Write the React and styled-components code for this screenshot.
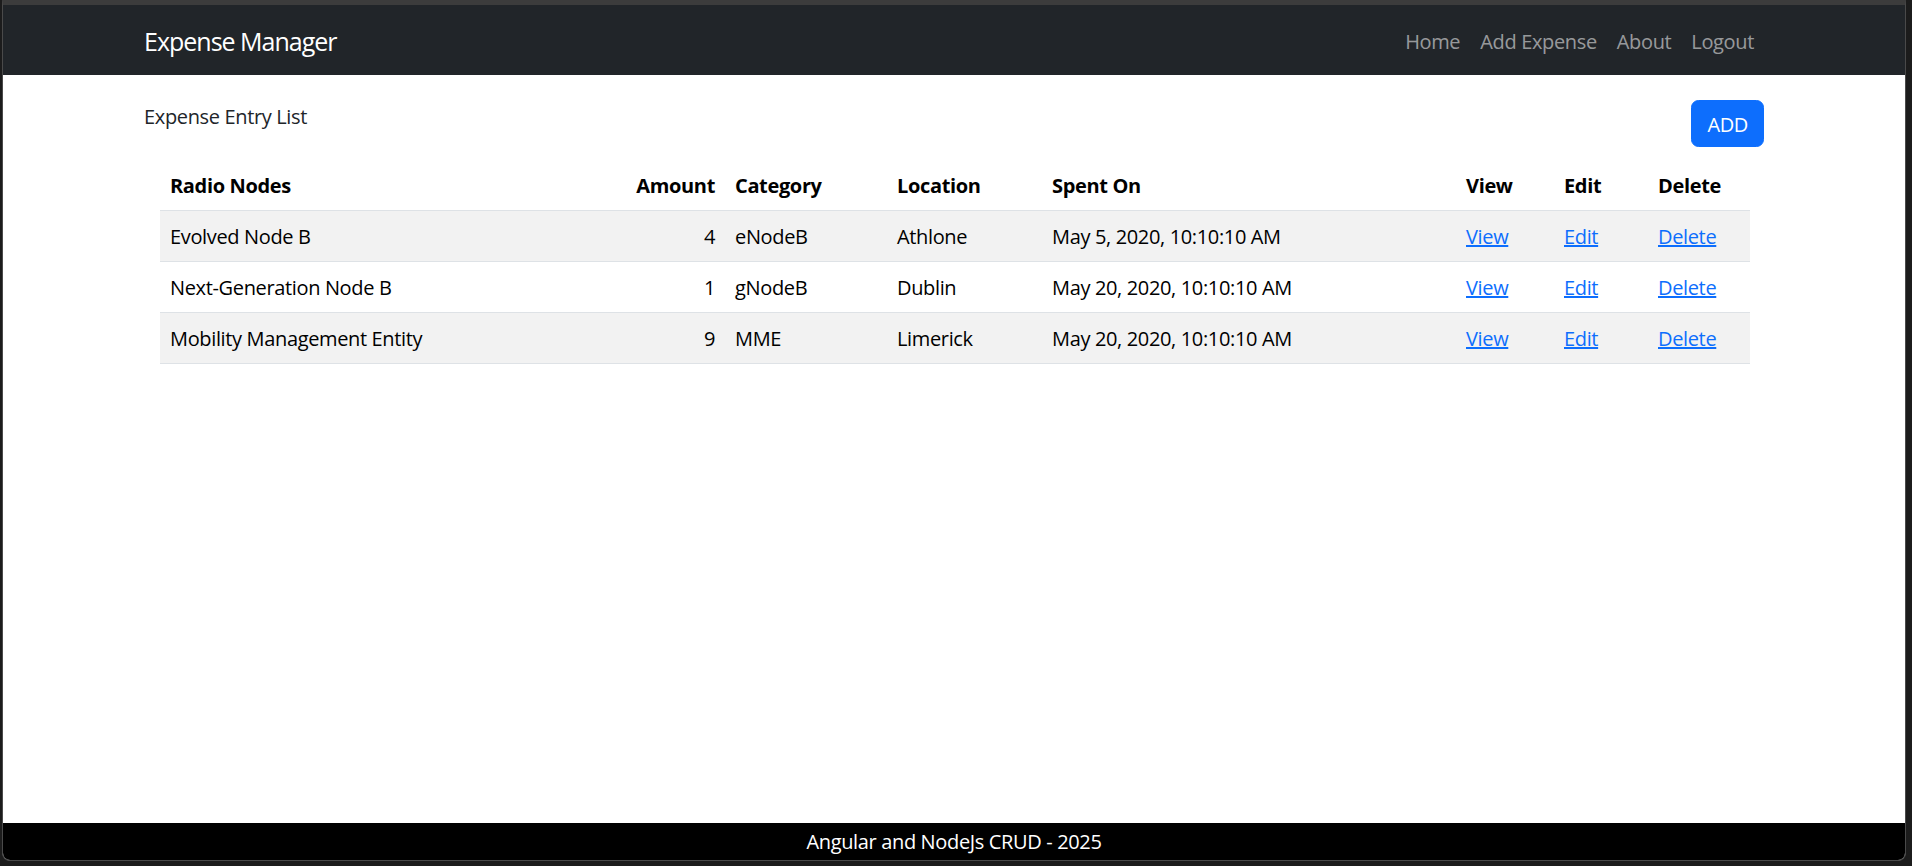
import React from 'react';
import styled, { createGlobalStyle } from 'styled-components';

const GlobalStyle = createGlobalStyle`
  html, body, #root {
    height: 100%;
  }
  body {
    margin: 0;
    background-color: #1c1c1c;
    font-family: 'Open Sans', 'Noto Sans', sans-serif;
    letter-spacing: -0.022em;
    -webkit-font-smoothing: antialiased;
  }
  * {
    box-sizing: border-box;
  }
`;

const Frame = styled.div`
  height: 100vh;
  display: flex;
  padding: 0 6px 5px 2px;
`;

const Window = styled.div`
  flex: 1;
  display: flex;
  flex-direction: column;
  background-color: #ffffff;
  border: 1px solid #4a4a4a;
  border-top: 5px solid #3c3c3c;
  border-radius: 0 0 8px 8px;
  overflow: hidden;
`;

const Navbar = styled.nav`
  height: 70px;
  flex-shrink: 0;
  background-color: #212529;
`;

const Container = styled.div`
  max-width: 1650px;
  margin: 0 auto;
  padding: 0 15px;
  height: 100%;
`;

const NavInner = styled(Container)`
  display: flex;
  align-items: center;
  justify-content: space-between;
  padding-top: 3px;
`;

const Brand = styled.a`
  font-size: 25px;
  line-height: 1.5;
  letter-spacing: -0.04em;
  color: #ffffff;
  text-decoration: none;
`;

const NavList = styled.ul`
  display: flex;
  list-style: none;
  margin: 0;
  padding: 0;
`;

const NavLink = styled.a`
  display: block;
  padding: 0 10px;
  font-size: 20px;
  line-height: 30px;
  color: rgba(255, 255, 255, 0.55);
  text-decoration: none;
`;

const Main = styled.main`
  flex: 1;
`;

const Content = styled(Container)`
  padding-top: 25px;
`;

const TopRow = styled.div`
  display: flex;
  justify-content: space-between;
  align-items: flex-start;
`;

const Title = styled.span`
  padding-top: 2px;
  font-size: 20px;
  line-height: 30px;
  color: #212529;
`;

const AddButton = styled.button`
  font-family: inherit;
  letter-spacing: inherit;
  font-size: 20px;
  line-height: 30px;
  padding: 8.5px 15px 6.5px;
  color: #ffffff;
  background-color: #0d6efd;
  border: 1px solid #0d6efd;
  border-radius: 7.5px;
  cursor: pointer;
`;

const Table = styled.table`
  margin: 13px 0 0 16px;
  width: 1590px;
  border-collapse: collapse;
  table-layout: fixed;
  color: #000000;
  font-size: 20px;
  line-height: 30px;
`;

const Col = styled.col`
  width: ${({ $w }) => $w}px;
`;

const Th = styled.th`
  padding: 11px 10px 9px;
  font-weight: 700;
  text-align: ${({ $right }) => ($right ? 'right' : 'left')};
  border-bottom: 1px solid #dee2e6;
  white-space: nowrap;
`;

const Row = styled.tr`
  background-color: ${({ $striped }) => ($striped ? '#f2f2f2' : '#ffffff')};
`;

const Td = styled.td`
  padding: 11px 10px 9px;
  text-align: ${({ $right }) => ($right ? 'right' : 'left')};
  border-bottom: 1px solid #dee2e6;
  white-space: nowrap;
`;

const ActionLink = styled.a`
  color: #0d6efd;
  text-decoration: underline;
  cursor: pointer;
`;

const Footer = styled.footer`
  height: 37px;
  flex-shrink: 0;
  background-color: #000000;
  color: #ffffff;
  text-align: center;
  font-size: 20px;
  line-height: 37px;
`;

const columns = [465, 100, 162, 155, 414, 98, 94, 102];

const entries = [
  { name: 'Evolved Node B', amount: 4, category: 'eNodeB', location: 'Athlone', spentOn: 'May 5, 2020, 10:10:10 AM' },
  { name: 'Next-Generation Node B', amount: 1, category: 'gNodeB', location: 'Dublin', spentOn: 'May 20, 2020, 10:10:10 AM' },
  { name: 'Mobility Management Entity', amount: 9, category: 'MME', location: 'Limerick', spentOn: 'May 20, 2020, 10:10:10 AM' },
];

const App = () => {
  return (
    <>
      <GlobalStyle />
      <Frame>
        <Window>
          <Navbar>
            <NavInner>
              <Brand href="#">Expense Manager</Brand>
              <NavList>
                <li><NavLink href="#">Home</NavLink></li>
                <li><NavLink href="#">Add Expense</NavLink></li>
                <li><NavLink href="#">About</NavLink></li>
                <li><NavLink href="#">Logout</NavLink></li>
              </NavList>
            </NavInner>
          </Navbar>
          <Main>
            <Content>
              <TopRow>
                <Title>Expense Entry List</Title>
                <AddButton>ADD</AddButton>
              </TopRow>
              <Table>
                <colgroup>
                  {columns.map((w, i) => (
                    <Col key={i} $w={w} />
                  ))}
                </colgroup>
                <thead>
                  <tr>
                    <Th>Radio Nodes</Th>
                    <Th $right>Amount</Th>
                    <Th>Category</Th>
                    <Th>Location</Th>
                    <Th>Spent On</Th>
                    <Th>View</Th>
                    <Th>Edit</Th>
                    <Th>Delete</Th>
                  </tr>
                </thead>
                <tbody>
                  {entries.map((entry, i) => (
                    <Row key={entry.name} $striped={i % 2 === 0}>
                      <Td>{entry.name}</Td>
                      <Td $right>{entry.amount}</Td>
                      <Td>{entry.category}</Td>
                      <Td>{entry.location}</Td>
                      <Td>{entry.spentOn}</Td>
                      <Td><ActionLink href="#">View</ActionLink></Td>
                      <Td><ActionLink href="#">Edit</ActionLink></Td>
                      <Td><ActionLink href="#">Delete</ActionLink></Td>
                    </Row>
                  ))}
                </tbody>
              </Table>
            </Content>
          </Main>
          <Footer>Angular and NodeJs CRUD - 2025</Footer>
        </Window>
      </Frame>
    </>
  );
};

export default App;
